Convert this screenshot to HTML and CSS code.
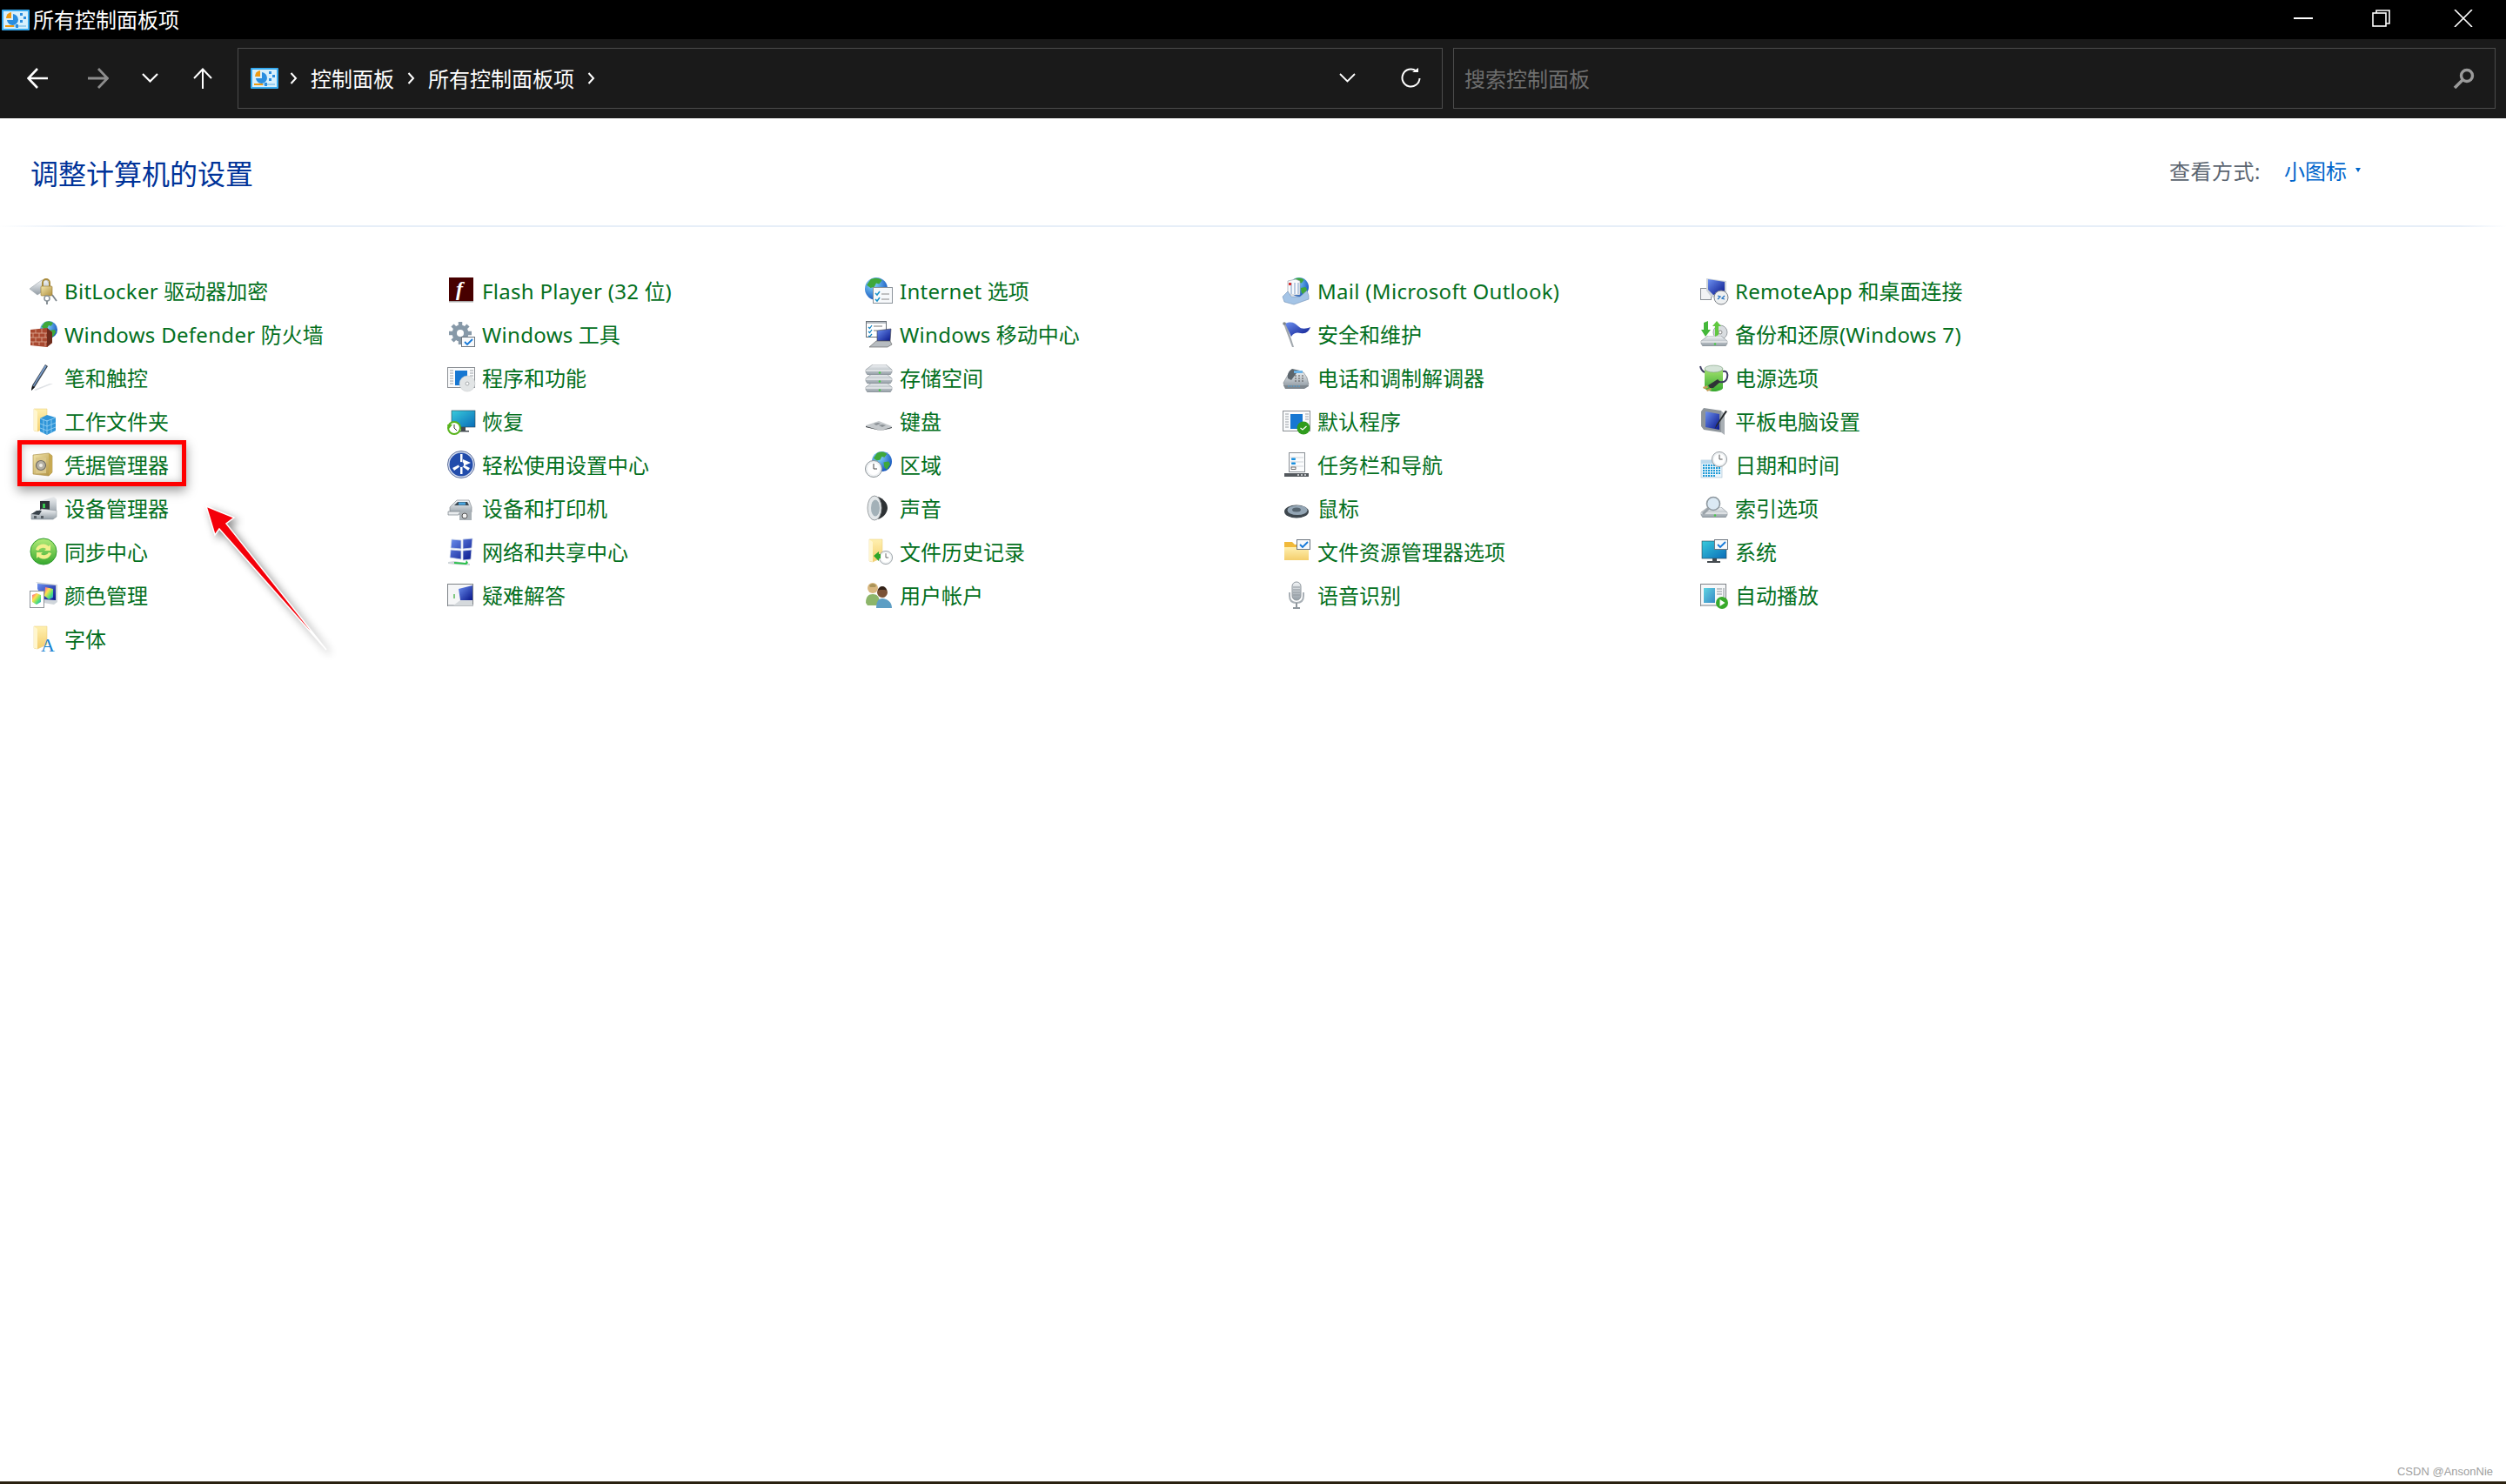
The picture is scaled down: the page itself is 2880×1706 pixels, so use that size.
FILE: index.html
```
<!DOCTYPE html>
<html lang="zh-CN">
<head>
<meta charset="utf-8">
<title>所有控制面板项</title>
<link rel="stylesheet" href="styles.css">
</head>
<body>
<svg class="defs" aria-hidden="true">
  <defs>
    <linearGradient id="gold" x1="0" y1="0" x2="1" y2="1"><stop offset="0" stop-color="#f3e6ac"/><stop offset="1" stop-color="#b0903f"/></linearGradient>
    <linearGradient id="folderg" x1="0" y1="0" x2="0" y2="1"><stop offset="0" stop-color="#fff0b0"/><stop offset="1" stop-color="#f4ce6c"/></linearGradient>
    <linearGradient id="metal" x1="0" y1="0" x2="0" y2="1"><stop offset="0" stop-color="#f4f6f8"/><stop offset="1" stop-color="#939da5"/></linearGradient>
    <linearGradient id="screen" x1="0" y1="0" x2="1" y2="1"><stop offset="0" stop-color="#38cbdc"/><stop offset="1" stop-color="#0a6cb8"/></linearGradient>
    <linearGradient id="navy" x1="0" y1="0" x2="1" y2="1"><stop offset="0" stop-color="#6c90f0"/><stop offset="1" stop-color="#08168a"/></linearGradient>
    <linearGradient id="greeng" x1="0" y1="0" x2="0" y2="1"><stop offset="0" stop-color="#b4ec78"/><stop offset="1" stop-color="#36a82e"/></linearGradient>
    <linearGradient id="rainbow" x1="0" y1="0" x2="1" y2="1"><stop offset="0" stop-color="#ff4fa0"/><stop offset=".35" stop-color="#ffe14a"/><stop offset=".7" stop-color="#4ae07a"/><stop offset="1" stop-color="#3a80ff"/></linearGradient>
    <radialGradient id="globeg" cx=".35" cy=".3" r=".8"><stop offset="0" stop-color="#8adcff"/><stop offset="1" stop-color="#0a48b8"/></radialGradient>
    <symbol id="cp" viewBox="0 0 32 24">
      <rect width="32" height="24" rx="1" fill="#36aaf0"/><rect x="2" y="2" width="28" height="20" fill="#d8f0fc"/>
      <path d="M11 10V3a7 7 0 0 0-6 7z" fill="#ef9a12"/><path d="M13 5a6.500 6.500 0 1 1-7 7h7z" fill="#2a8ee0"/>
      <rect x="21" y="4" width="3" height="3" fill="#2a8ee0"/><rect x="25" y="8" width="3" height="3" fill="#2a8ee0"/><rect x="21" y="12" width="3" height="3" fill="#2a8ee0"/>
      <rect x="4" y="18" width="10" height="2" fill="#ef9a12"/><rect x="14" y="18" width="14" height="2" fill="#9ccfef"/><rect x="16" y="17" width="3" height="4" fill="#2a8ee0"/>
    </symbol>
    <symbol id="globe" viewBox="0 0 24 24">
      <circle cx="12" cy="12" r="12" fill="url(#globeg)"/>
      <path d="M6 2c4-2 9-2 12 1l-3 4-3-1-2 4-4 1-4-3zM14 13l6-1 2 3-4 7-3-3z" fill="#3fa83a"/>
    </symbol>
    <symbol id="clock" viewBox="0 0 20 20">
      <circle cx="10" cy="10" r="9.500" fill="#eef1f3" stroke="#8c9398"/><circle cx="10" cy="10" r="7" fill="#fff"/>
      <path d="M10 4v6h4" fill="none" stroke="#444" stroke-width="1"/>
    </symbol>
    <symbol id="folder" viewBox="0 0 32 32">
      <path d="M5 1h15v21L9 27l-4-1z" fill="url(#folderg)" stroke="#e4c877" stroke-width=".5"/><path d="M5 1l4 3v23l-4-1z" fill="#fff6cf"/>
    </symbol>
    <symbol id="appwin" viewBox="0 0 32 32">
      <rect x=".5" y="3.500" width="31" height="23" fill="#fafbfc" stroke="#8b8f94"/>
      <path d="M3 7h4M3 10h4M3 13h4M3 16h4M3 19h4M3 22h4M26 7h4M26 10h4M26 13h4" stroke="#9aa0a6"/>
      <rect x="9" y="7" width="14" height="17" fill="#1677d2"/>
    </symbol>
    <symbol id="miniwin" viewBox="0 0 16 12">
      <rect x=".5" y=".5" width="15" height="11" fill="#f7f9fb" stroke="#6d7680"/>
      <path d="M4 6l3 3 6-6" fill="none" stroke="#1478d8" stroke-width="1.800"/>
    </symbol>
    <symbol id="drive" viewBox="0 0 32 12">
      <path d="M1 6L9 0h15l7 6v3l-2 3H3L1 9z" fill="url(#metal)" stroke="#7f888f" stroke-width=".6"/><path d="M1 7h30" stroke="#fff"/><circle cx="17" cy="9.500" r="1.300" fill="#49c94a"/>
    </symbol>
  </defs>
</svg>

<div class="titlebar">
  <svg class="title-icon"><use href="#cp"/></svg>
  <span class="title-text">所有控制面板项</span>
  <div class="win-controls">
    <svg class="wc-min" viewBox="0 0 22 2"><rect width="22" height="2" fill="#fff"/></svg>
    <svg class="wc-max" viewBox="0 0 21 20"><rect x="1" y="4" width="15" height="15" fill="none" stroke="#fff" stroke-width="1.600"/><path d="M5 4V1h15v15h-4" fill="none" stroke="#fff" stroke-width="1.600"/></svg>
    <svg class="wc-close" viewBox="0 0 22 20"><path d="M1 0l20 20M21 0L1 20" stroke="#fff" stroke-width="1.600"/></svg>
  </div>
</div>

<div class="toolbar">
  <svg class="nav nav-back" viewBox="0 0 24 24"><path d="M24 12H2M12 1L1.500 12 12 23" fill="none" stroke="#fff" stroke-width="2.600"/></svg>
  <svg class="nav nav-fwd" viewBox="0 0 24 24"><path d="M0 12h22M12 1l10.500 11L12 23" fill="none" stroke="#8c8c8c" stroke-width="2.800"/></svg>
  <svg class="nav nav-drop" viewBox="0 0 19 11"><path d="M1 1l8.500 8.500L18 1" fill="none" stroke="#fff" stroke-width="2.200"/></svg>
  <svg class="nav nav-up" viewBox="0 0 22 24"><path d="M11 24V2M1 12L11 1.500 21 12" fill="none" stroke="#fff" stroke-width="2"/></svg>
  <div class="address">
    <svg class="addr-icon"><use href="#cp"/></svg>
    <svg class="crumb-sep" viewBox="0 0 9 14"><path d="M1.500 1l5.500 6-5.500 6" fill="none" stroke="#fff" stroke-width="2"/></svg>
    <span class="crumb">控制面板</span>
    <svg class="crumb-sep" viewBox="0 0 9 14"><path d="M1.500 1l5.500 6-5.500 6" fill="none" stroke="#fff" stroke-width="2"/></svg>
    <span class="crumb">所有控制面板项</span>
    <svg class="crumb-sep" viewBox="0 0 9 14"><path d="M1.500 1l5.500 6-5.500 6" fill="none" stroke="#fff" stroke-width="2"/></svg>
    <svg class="addr-drop" viewBox="0 0 19 11"><path d="M1 1l8.500 8.500L18 1" fill="none" stroke="#fff" stroke-width="1.800"/></svg>
    <svg class="addr-refresh" viewBox="0 0 23 23"><path d="M17.500 3.500A10 10 0 1 0 21.500 12" fill="none" stroke="#fff" stroke-width="2"/><path d="M13 5h7V0z" fill="#fff"/></svg>
  </div>
  <div class="search">
    <span class="search-text">搜索控制面板</span>
    <svg class="search-icon" viewBox="0 0 25 24"><circle cx="16" cy="9" r="6.500" fill="none" stroke="#9a9a9a" stroke-width="3.400"/><path d="M11 14L2 23" stroke="#9a9a9a" stroke-width="3.600"/></svg>
  </div>
</div>

<main class="content">
  <header class="head">
    <h1 class="heading">调整计算机的设置</h1>
    <div class="view">
      <span class="view-label">查看方式:</span>
      <a class="view-link">小图标</a>
      <svg class="view-caret" viewBox="0 0 6 5"><path d="M0 0h6L3 5z" fill="#0066cc"/></svg>
    </div>
  </header>

  <div class="grid">
    <div class="col">
      <a class="item"><svg class="ico" viewBox="0 0 32 32"><path d="M0 13L14 3h6l4 7L9 20z" fill="url(#metal)" stroke="#9aa2a8" stroke-width=".6"/><path d="M15 10V6a4 4 0 0 1 8 0v4" fill="none" stroke="#a88b3c" stroke-width="2"/><rect x="13" y="10" width="13" height="11" rx="1" fill="url(#gold)" stroke="#94772c" stroke-width=".6"/><circle cx="20" cy="24" r="3" fill="none" stroke="#8d969c" stroke-width="1.600"/><path d="M20 27v4M26 20l5 7" stroke="#7c858c" stroke-width="1.800"/></svg><span><span class="lat">BitLocker</span> 驱动器加密</span></a>
      <a class="item"><svg class="ico" viewBox="0 0 32 32"><use href="#globe" x="12" y="0" width="20" height="20"/><path d="M1 10l19-2 6 5v12l-6 5-19-2z" fill="#a9482f"/><path d="M1 14h20M1 19h20M1 24h20M7 10v4M14 9v5M4 14v5M11 14v5M18 14v5M7 19v5M14 19v5M4 24v4M11 24v4M18 24v5" stroke="#d9a58f" stroke-width=".9"/><path d="M20 8l6 5v12l-6 5z" fill="#6e2c1c"/></svg><span><span class="lat">Windows Defender</span> 防火墙</span></a>
      <a class="item"><svg class="ico" viewBox="0 0 32 32"><path d="M5 29l18-7 4 0-20 8z" fill="#dfe2e5"/><path d="M18 0l3 2-15 24-4 4 1-6z" fill="#3c4550"/><path d="M18 1l1.500 1L5 25l-1-.5z" fill="#7fa6d8"/><path d="M2 30l1-5 3 1z" fill="#111"/></svg><span>笔和触控</span></a>
      <a class="item"><svg class="ico" viewBox="0 0 32 32"><use href="#folder" width="32" height="32"/><path d="M20 8l10 3v15l-10 5-8-4V12z" fill="#2f95d8"/><path d="M20 14v17M12 12l8 3 10-4M12 18l8 3 10-4M12 23l8 3 10-4M16 13v16M25 13v16" stroke="#9dd4f5" stroke-width=".8" fill="none"/></svg><span>工作文件夹</span></a>
      <a class="item"><svg class="ico" viewBox="0 0 32 32"><path d="M4 4l18-2 4 3v19l-4 4-18-2z" fill="url(#gold)" stroke="#a28840" stroke-width=".6"/><path d="M22 2l4 3v19l-4 4z" fill="#c7a952"/><rect x="7" y="7" width="12" height="18" fill="#dcc88a"/><circle cx="13" cy="16" r="5.500" fill="#b4b0a4" stroke="#6f6c62" stroke-width="1.200"/><circle cx="13" cy="16" r="2" fill="#f2f0e8"/></svg><span>凭据管理器</span></a>
      <a class="item"><svg class="ico" viewBox="0 0 32 32"><path d="M12 7l16-5 3 3v16H12z" fill="url(#metal)"/><path d="M12 7h11v13H12z" fill="#2d3338"/><rect x="15" y="10" width="3" height="5" fill="#37c94e"/><path d="M6 21l8-5 17 2v7l-4 3H2v-6z" fill="url(#metal)" stroke="#8b949b" stroke-width=".6"/><path d="M2 22l6-4h6l-3 5z" fill="#39424a"/><rect x="5" y="24" width="3" height="3" fill="#555d63"/><rect x="13" y="24" width="3" height="3" fill="#555d63"/></svg><span>设备管理器</span></a>
      <a class="item"><svg class="ico" viewBox="0 0 32 32"><circle cx="16" cy="15" r="15" fill="url(#greeng)"/><circle cx="16" cy="15" r="15" fill="none" stroke="#2d9a2d" stroke-width="1"/><path d="M7 13a9 9 0 0 1 15-4l2-2v7h-7l2-2a6 6 0 0 0-9 2zM25 17a9 9 0 0 1-15 4l-2 2v-7h7l-2 2a6 6 0 0 0 9-2z" fill="#f2f08c"/></svg><span>同步中心</span></a>
      <a class="item"><svg class="ico" viewBox="0 0 32 32"><path d="M7 0l25 3v20l-4 3-12-2V8z" fill="#cfd5da"/><path d="M9 2l21 2v17L16 20 9 8z" fill="url(#navy)"/><path d="M18 6l9 2v10l-5 2-5-4z" fill="url(#rainbow)"/><rect x=".5" y="10.500" width="16" height="19" fill="#fff" stroke="#8d9298"/><path d="M3 15l5-2 5 2v8l-5 3-5-3z" fill="url(#rainbow)"/></svg><span>颜色管理</span></a>
      <a class="item"><svg class="ico" viewBox="0 0 32 32"><use href="#folder" width="32" height="32"/><text class="icon-a" x="13" y="30">A</text></svg><span>字体</span></a>
    </div>

    <div class="col">
      <a class="item"><svg class="ico" viewBox="0 0 32 32"><rect x="2" y="0" width="28" height="27" fill="#470000"/><path d="M2 27h28v1.500H2z" fill="#a8a8a8"/><text class="icon-f" x="10" y="21">f</text></svg><span><span class="lat">Flash Player (32</span> 位)</span></a>
      <a class="item"><svg class="ico" viewBox="0 0 32 32"><circle cx="15" cy="14" r="9.500" fill="#8799a8"/><path d="M15 1v26M2 14h26M6 5l18 18M24 5L6 23" stroke="#8799a8" stroke-width="4.500"/><circle cx="15" cy="14" r="4" fill="#fff"/><use href="#miniwin" x="16" y="18" width="16" height="12"/></svg><span><span class="lat">Windows</span> 工具</span></a>
      <a class="item"><svg class="ico" viewBox="0 0 32 32"><use href="#appwin" width="32" height="32"/><circle cx="23" cy="22" r="9" fill="#e2e5e6" stroke="#c0c4c6" stroke-width=".5"/><circle cx="23" cy="22" r="2" fill="#fff" stroke="#a8acaf"/></svg><span>程序和功能</span></a>
      <a class="item"><svg class="ico" viewBox="0 0 32 32"><rect x="5" y="3" width="27" height="19" fill="url(#screen)" stroke="#29424f" stroke-width=".6"/><path d="M15 22h6v4H16zM14 26h11v1.500H14z" fill="#434a50"/><circle cx="8" cy="23" r="7" fill="#fff" stroke="#58b41c" stroke-width="2"/><path d="M8 19v4l3 3" fill="none" stroke="#333"/><path d="M0 19h6l-4 5z" fill="#58b41c"/></svg><span>恢复</span></a>
      <a class="item"><svg class="ico" viewBox="0 0 32 32"><circle cx="16" cy="15" r="15.500" fill="#d7dff0" stroke="#5d6f9c"/><circle cx="16" cy="15" r="13.500" fill="#224cab"/><path d="M15 3h2.500v10H15zM6 19l8-4 1 2-7 5zM26 19l-8-4-1 2 7 5zM15 17h2.500v9H15z" fill="#fff"/><path d="M18 9l9 4-9 4z" fill="#fff"/><circle cx="16" cy="15" r="3" fill="#224cab"/></svg><span>轻松使用设置中心</span></a>
      <a class="item"><svg class="ico" viewBox="0 0 32 32"><path d="M3 14L11 6h14l3 8v6l-3 2H3z" fill="url(#metal)" stroke="#737b81" stroke-width=".6"/><path d="M8 12l4-4h11l2 4z" fill="#3c4a55"/><rect x="13" y="8.500" width="8" height="3" fill="#4ba6e0"/><path d="M1 19h14l-2 4H1z" fill="#e9ecee" stroke="#676f75" stroke-width=".6"/><rect x="14" y="19" width="14" height="10" fill="#aab1b6"/><circle cx="20" cy="24" r="3" fill="#f2f2f2" stroke="#555"/></svg><span>设备和打印机</span></a>
      <a class="item"><svg class="ico" viewBox="0 0 32 32"><path d="M5 1l11 1v10L4 11zM18 1l11-1-1 11-10 1zM4 13l12 1v10L3 22zM18 14l10-1-1 11-9 1z" fill="url(#navy)" stroke="#cfd8ea" stroke-width=".8"/><path d="M1 27l8-1 17 3v2l-17-1-8-1z" fill="#d0d6da"/><path d="M8 27l13 1 1-3 2 3-2 2-14-1z" fill="#28c04a"/></svg><span>网络和共享中心</span></a>
      <a class="item"><svg class="ico" viewBox="0 0 32 32"><rect x=".5" y="2.500" width="29" height="25" fill="#f5f6f7" stroke="#7d8287"/><path d="M1 26h29v2H1z" fill="#b9bdc1"/><path d="M13 8l16-4v17H15z" fill="url(#navy)"/><path d="M7 27l8-6h14v6z" fill="#d5d9dc"/><rect x="7" y="14" width="2" height="5" fill="#7fc97f"/></svg><span>疑难解答</span></a>
    </div>

    <div class="col">
      <a class="item"><svg class="ico" viewBox="0 0 32 32"><use href="#globe" width="26" height="26"/><rect x="9.500" y="11.500" width="22" height="18" fill="#f7f9fb" stroke="#8c949b"/><path d="M12 18l2 2 3-4M12 25l2 2 3-4" fill="none" stroke="#1490c8" stroke-width="1.500"/><path d="M19 19h9M19 25h9" stroke="#888"/></svg><span><span class="lat">Internet</span> 选项</span></a>
      <a class="item"><svg class="ico" viewBox="0 0 32 32"><rect x="1.500" y=".5" width="23" height="18" fill="#fff" stroke="#6a7178"/><rect x="2" y="1" width="22" height="2" fill="#b7bdc3"/><path d="M4 7l1.500 1.500L8 5M4 12l1.500 1.500L8 10M4 17l1.500 1L8 15" fill="none" stroke="#1080c0" stroke-width="1.200"/><path d="M10 6h10M10 11h4" stroke="#777"/><path d="M14 11l16-2-1 14H14z" fill="url(#navy)" stroke="#444" stroke-width=".6"/><path d="M13 23h16l2 4-5 3H5z" fill="#b7bcc0" stroke="#555" stroke-width=".6"/></svg><span><span class="lat">Windows</span> 移动中心</span></a>
      <a class="item"><svg class="ico" viewBox="0 0 32 32"><use href="#drive" y="20" width="32" height="12"/><use href="#drive" y="10" width="32" height="12"/><use href="#drive" y="0" width="32" height="12"/></svg><span>存储空间</span></a>
      <a class="item"><svg class="ico" viewBox="0 0 32 32"><path d="M1 20l15-5 15 6-2 3-11 2L1 22z" fill="#c5c9cc"/><path d="M1 21l17 5 13-4v1l-13 3L1 22z" fill="#2e3236"/><path d="M10 18l5-1 3 1-5 2zM16 20l4-1 4 1-4 2z" fill="#8a9095"/></svg><span>键盘</span></a>
      <a class="item"><svg class="ico" viewBox="0 0 32 32"><use href="#globe" x="8" y="0" width="23" height="23"/><use href="#clock" x="0" y="10" width="20" height="20"/></svg><span>区域</span></a>
      <a class="item"><svg class="ico" viewBox="0 0 32 32"><path d="M14 2c6 1 12 7 12 13s-6 12-12 13z" fill="#2d3134"/><ellipse cx="11" cy="15" rx="8" ry="14" fill="#e4e8ea" stroke="#9ba0a3"/><ellipse cx="12" cy="15" rx="5" ry="9.500" fill="#a3b1b8"/></svg><span>声音</span></a>
      <a class="item"><svg class="ico" viewBox="0 0 32 32"><use href="#folder" width="32" height="32"/><use href="#clock" x="16" y="14" width="16" height="16"/><path d="M10 20l6-5v3h2v5h-2v3z" fill="#2fa52a"/></svg><span>文件历史记录</span></a>
      <a class="item"><svg class="ico" viewBox="0 0 32 32"><circle cx="9" cy="7" r="6" fill="#d9b77f"/><path d="M5 4a5 5 0 0 1 8 0l-1 2H6z" fill="#a99358"/><path d="M1 24c0-7 3-10 8-10s8 3 8 10l-4 3H3z" fill="#8cb56a"/><circle cx="20" cy="12" r="6" fill="#7b5236"/><path d="M15 10a5 5 0 0 1 10 0l-2-1h-6z" fill="#332218"/><path d="M13 30c0-8 3-11 7-11s11 3 11 11z" fill="#5d9ec4"/></svg><span>用户帐户</span></a>
    </div>

    <div class="col">
      <a class="item"><svg class="ico" viewBox="0 0 32 32"><use href="#globe" x="8" y="0" width="22" height="22"/><path d="M6 4l9-2 5 2v16H6z" fill="#f8fafc" stroke="#8d97a3" stroke-width=".6"/><path d="M10 6v13M14 6v13M18 6v13" stroke="#7a9bc4"/><rect x="7" y="6" width="3" height="3" fill="#d83030"/><path d="M0 22l6-6 4 6h10l8-7 2 6v4L13 31 2 28z" fill="#a4c4e6" stroke="#6f8fb4" stroke-width=".6"/></svg><span><span class="lat">Mail (Microsoft Outlook)</span></span></a>
      <a class="item"><svg class="ico" viewBox="0 0 32 32"><path d="M1 3l3-1 9 28h-2z" fill="#a2a8ae"/><path d="M3 3c7-3 11-1 15 3s9 3 14 1c-2 5-5 8-11 7-4-1-8-1-11 4z" fill="url(#navy)"/><circle cx="2" cy="3" r="1.800" fill="#7d848a"/></svg><span>安全和维护</span></a>
      <a class="item"><svg class="ico" viewBox="0 0 32 32"><path d="M1 21L9 7l15 2 4 6 2 8-4 2H2z" fill="url(#metal)" stroke="#727a80" stroke-width=".6"/><path d="M1 24h29v1l-5 3H3z" fill="#7f878e"/><path d="M6 16c-1-6 2-9 5-11l9 2-4 3-6 8z" fill="#5c656c"/><rect x="13" y="7" width="10" height="3" fill="#6bb3e8"/><path d="M14 13h10M14 16h10M14 19h10" stroke="#555" stroke-dasharray="2 2"/><path d="M6 25h14" stroke="#4ea4dc" stroke-dasharray="2 1"/></svg><span>电话和调制解调器</span></a>
      <a class="item"><svg class="ico" viewBox="0 0 32 32"><use href="#appwin" width="32" height="32"/><circle cx="24" cy="23" r="7.500" fill="#2f9c1e"/><path d="M20.500 23l2.500 2 4.500-4" fill="none" stroke="#fff" stroke-width="1.300"/></svg><span>默认程序</span></a>
      <a class="item"><svg class="ico" viewBox="0 0 32 32"><rect x="7.500" y="1.500" width="18" height="22" fill="#fbfcfd" stroke="#8a9096"/><path d="M9 7h15M9 12h15M9 17h15" stroke="#cfd4d8"/><rect x="10" y="7.500" width="5" height="2.500" rx="1" fill="#1890e0"/><rect x="10" y="12.500" width="5" height="2.500" rx="1" fill="#1890e0"/><rect x="10" y="18" width="5" height="2.500" fill="#fff" stroke="#333" stroke-width=".7"/><rect x="2" y="25" width="28" height="4" fill="#54595e"/><path d="M17 27h2M21 27h2M25 27h2" stroke="#e2e4e6" stroke-width="1.500"/></svg><span>任务栏和导航</span></a>
      <a class="item"><svg class="ico" viewBox="0 0 32 32"><ellipse cx="16" cy="19" rx="14" ry="7.500" fill="#3e474e"/><ellipse cx="17" cy="17.500" rx="11.500" ry="5.500" fill="#94a6b5"/><ellipse cx="16" cy="17" rx="5" ry="2.500" fill="#566570"/></svg><span>鼠标</span></a>
      <a class="item"><svg class="ico" viewBox="0 0 32 32"><path d="M2 4h9l3 3h16v18H2z" fill="#f1b93a"/><path d="M2 10h28v15H2z" fill="url(#folderg)"/><use href="#miniwin" x="16" y="1" width="16" height="12"/></svg><span>文件资源管理器选项</span></a>
      <a class="item"><svg class="ico" viewBox="0 0 32 32"><rect x="11" y="0" width="10" height="21" rx="5" fill="url(#metal)" stroke="#8f979d"/><path d="M12 6h8M12 9h8M12 12h8M12 15h8" stroke="#8f979d"/><path d="M8 12v4c0 5 3 8 8 8s8-3 8-8v-4" fill="none" stroke="#a9b0b6" stroke-width="2"/><path d="M16 24v5M12 30h8" stroke="#8f979d" stroke-width="2"/></svg><span>语音识别</span></a>
    </div>

    <div class="col">
      <a class="item"><svg class="ico" viewBox="0 0 32 32"><rect x=".5" y="12.500" width="12" height="13" fill="#f2f3f4" stroke="#888e94"/><path d="M7 1l23 3v16l-17 3-6-8z" fill="#cdd3d8"/><path d="M9 2l19 3v13l-13 2-6-6z" fill="url(#navy)"/><circle cx="24" cy="23" r="8" fill="#eef0f1" stroke="#7a8086"/><path d="M20 25l3-3-3-1M28 21l-3 3 3 1" fill="none" stroke="#1e6fc0" stroke-width="1.300"/></svg><span><span class="lat">RemoteApp</span> 和桌面连接</span></a>
      <a class="item"><svg class="ico" viewBox="0 0 32 32"><circle cx="23" cy="13" r="8" fill="#d9dde0" stroke="#9aa0a5"/><circle cx="23" cy="13" r="2" fill="#fff" stroke="#888"/><use href="#drive" x="0" y="17" width="32" height="12"/><path d="M9 0v10h3l-6 8-5-8h3V2z" fill="#44b83a"/><path d="M17 18V6h-3l5-6 5 6h-3v10z" fill="#60c840"/></svg><span>备份和还原(<span class="lat">Windows 7</span>)</span></a>
      <a class="item"><svg class="ico" viewBox="0 0 32 32"><path d="M5 5c0-2 8-4 11-4s10 2 10 4v22c0 2-6 4-10 4S5 29 5 27z" fill="url(#greeng)"/><ellipse cx="15.500" cy="5" rx="10.500" ry="4" fill="#d5e4d8" stroke="#7c9a85" stroke-width=".6"/><path d="M26 8c5-1 6 3 5 7s-4 6-9 5M0 2c1 4 3 6 5 7" fill="none" stroke="#3c3c60" stroke-width="2"/><path d="M9 24l11-7 3 3-8 7h-4z" fill="#2f3336"/><path d="M8 24l-5 2 1 2 5-1zM12 27l-5 2 1 2 5-2z" fill="#c69c58"/></svg><span>电源选项</span></a>
      <a class="item"><svg class="ico" viewBox="0 0 32 32"><path d="M4 0l20 3v25L4 25 1 21V4z" fill="#8d949a"/><path d="M6 4l16 3v18L6 22z" fill="url(#navy)"/><path d="M24 3l4 4v24l-4-3z" fill="#a9afb4"/><path d="M29 3l2 1-12 17-2 3 1-4z" fill="#26292c"/></svg><span>平板电脑设置</span></a>
      <a class="item"><svg class="ico" viewBox="0 0 32 32"><rect x="1" y="10" width="24" height="20" fill="#e9f4fb" stroke="#a6bfd0" stroke-width=".6"/><rect x="1" y="10" width="24" height="4" fill="#bcd9ec"/><path d="M3 16h20M3 19h20M3 22h20M3 25h20M3 28h15" stroke="#1d9ad6" stroke-width="2" stroke-dasharray="2 1"/><use href="#clock" x="13" y="0" width="18" height="18"/></svg><span>日期和时间</span></a>
      <a class="item"><svg class="ico" viewBox="0 0 32 32"><use href="#drive" x="0" y="14" width="32" height="12"/><circle cx="15" cy="10" r="7.500" fill="#dbe9f4" stroke="#8d979e" stroke-width="1.600"/><path d="M10 15l-7 7" stroke="#9aa2a8" stroke-width="3"/></svg><span>索引选项</span></a>
      <a class="item"><svg class="ico" viewBox="0 0 32 32"><rect x="2" y="3" width="28" height="20" fill="url(#screen)" stroke="#2b4452" stroke-width=".6"/><path d="M14 23h5v3h-5zM8 26h15v2H8z" fill="#454b50"/><use href="#miniwin" x="16" y="1" width="16" height="12"/></svg><span>系统</span></a>
      <a class="item"><svg class="ico" viewBox="0 0 32 32"><rect x=".5" y="2.500" width="29" height="25" fill="#f6f7f8" stroke="#7d8287"/><rect x="1" y="26" width="29" height="2" fill="#b9bdc1"/><rect x="4" y="7" width="13" height="17" fill="url(#screen)" opacity=".8"/><path d="M19 8h6M19 11h6M19 14h6M27 7v10" stroke="#8b9298"/><circle cx="25" cy="24" r="7" fill="#38aa2a"/><path d="M22.500 20l6 4-6 4z" fill="#fff"/></svg><span>自动播放</span></a>
    </div>
  </div>

  <div class="redbox"></div>
  <svg class="red-arrow" viewBox="0 0 170 190"><polygon points="17,12 49,25 40,32 155,177 32,38 27,45" fill="#f4000a" stroke="#fff" stroke-width="1.500"/></svg>
  <div class="watermark">CSDN @AnsonNie</div>
</main>
<div class="bottom-line"></div>
</body>
</html>
```
FILE: styles.css
```
* { box-sizing: border-box; }
html, body { margin: 0; padding: 0; }
body {
  width: 2880px;
  height: 1706px;
  display: flex;
  flex-direction: column;
  overflow: hidden;
  position: relative;
  background: #fff;
  font-family: "Noto Sans", "Noto Sans CJK SC", sans-serif;
  font-size: 24px;
}
.defs { position: absolute; width: 0; height: 0; }

.titlebar {
  height: 45px;
  background: #000;
  color: #fff;
  display: flex;
  align-items: center;
  padding-left: 2px;
  flex: none;
}
.title-icon { width: 32px; height: 24px; margin-right: 4px; }
.title-text { line-height: 45px; }
.win-controls { margin-left: auto; display: flex; align-items: center; padding-right: 38px; }
.wc-min { width: 22px; height: 2px; margin-right: 68px; margin-top: -3px; }
.wc-max { width: 21px; height: 20px; margin-right: 73px; margin-top: -3px; }
.wc-close { width: 22px; height: 20px; margin-top: -3px; }

.toolbar {
  height: 91px;
  flex: none;
  background: #1a1a1a;
  display: flex;
  align-items: center;
  padding: 0 12px 2px 31px;
}
.nav { flex: none; }
.nav-back { width: 24px; height: 24px; margin-right: 46px; }
.nav-fwd { width: 24px; height: 24px; margin-right: 38px; }
.nav-drop { width: 19px; height: 11px; margin-right: 40px; }
.nav-up { width: 22px; height: 24px; margin-right: 29px; }

.address, .search {
  height: 70px;
  border: 1px solid #4c4c4c;
  display: flex;
  align-items: center;
  flex: none;
}
.address { width: 1385px; padding: 0 24px 0 14px; color: #fff; margin-right: 12px; }
.addr-icon { width: 32px; height: 24px; margin-right: 13px; }
.crumb-sep { width: 9px; height: 14px; flex: none; }
.crumb { margin: 0 15px; }
.addr-drop { width: 19px; height: 11px; margin-left: auto; margin-right: 52px; }
.addr-refresh { width: 23px; height: 23px; }

.search { width: 1198px; padding: 0 23px 0 12px; color: #6e6e6e; }
.search-icon { width: 25px; height: 24px; margin-left: auto; }

.content {
  flex: 1;
  position: relative;
  background: #fff;
  border-top: 3px solid;
  border-image: linear-gradient(#fff 33%, #d4d4d4 33%, #d4d4d4 66%, #fff 66%) 3;
}
.head {
  height: 122px;
  display: flex;
  align-items: center;
  justify-content: space-between;
  padding: 0 167px 0 35px;
  border-bottom: 2px solid;
  border-image: linear-gradient(90deg, #fff, #e6eef8 3%, #e6eef8 98%, #fff) 2;
}
.heading { margin: 2px 0 0; font-size: 32px; font-weight: 400; color: #003399; line-height: 44px; }
.view { display: flex; align-items: center; margin-top: -8px; }
.view-label { color: #5b6570; width: 132px; letter-spacing: .5px; }
.view-link { color: #0066cc; }
.view-caret { width: 6px; height: 5px; margin-left: 10px; }

.grid {
  display: flex;
  padding: 49px 0 0 34px;
}
.col {
  width: 480px;
  flex: none;
  display: flex;
  flex-direction: column;
}
.item {
  display: flex;
  align-items: center;
  gap: 8px;
  height: 50px;
  line-height: 50px;
  color: #04701e;
  white-space: nowrap;
}
.lat { letter-spacing: .3px; }
.ico { width: 32px; height: 32px; flex: none; overflow: visible; }
.icon-a { font-family: "Liberation Serif", serif; font-size: 22px; fill: #1580d0; }
.icon-f { font-family: "Liberation Serif", serif; font-style: italic; font-weight: 700; font-size: 24px; fill: #fff; }

.redbox {
  position: absolute;
  left: 20px;
  top: 367px;
  width: 194px;
  height: 53px;
  border: 5px solid #ff0000;
  box-shadow: 0 5px 12px rgba(0, 0, 0, .4), inset 0 0 10px rgba(0, 0, 0, .25);
}
.red-arrow {
  position: absolute;
  left: 220px;
  top: 431px;
  width: 170px;
  height: 190px;
  filter: drop-shadow(4px 4px 5px rgba(0, 0, 0, .45));
}
.watermark {
  position: absolute;
  right: 15px;
  bottom: 3px;
  font-family: "Liberation Sans", sans-serif;
  font-size: 13px;
  line-height: 16px;
  color: #a0a0a0;
}
.bottom-line { height: 3px; flex: none; background: #2a2110; }
```
